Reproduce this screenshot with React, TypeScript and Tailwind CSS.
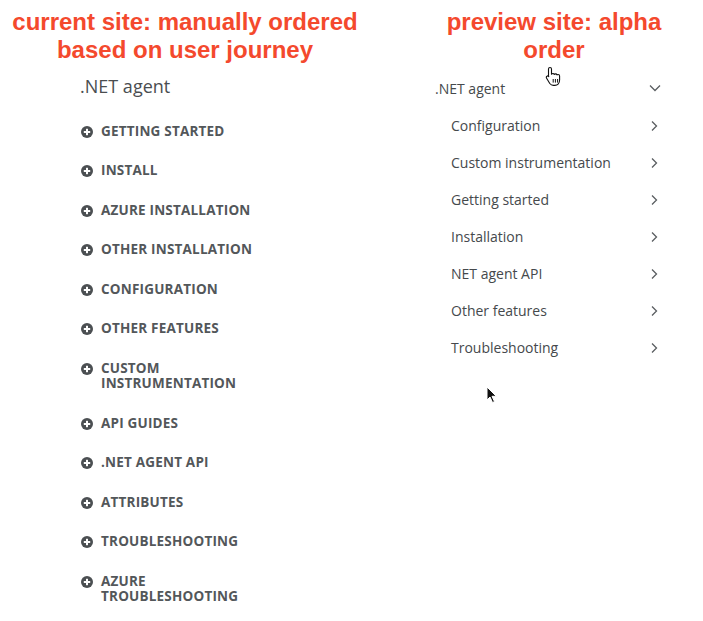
import React from "react";

const currentItems: string[][] = [
  ["GETTING STARTED"],
  ["INSTALL"],
  ["AZURE INSTALLATION"],
  ["OTHER INSTALLATION"],
  ["CONFIGURATION"],
  ["OTHER FEATURES"],
  ["CUSTOM", "INSTRUMENTATION"],
  ["API GUIDES"],
  [".NET AGENT API"],
  ["ATTRIBUTES"],
  ["TROUBLESHOOTING"],
  ["AZURE", "TROUBLESHOOTING"],
];

const previewItems = [
  "Configuration",
  "Custom instrumentation",
  "Getting started",
  "Installation",
  "NET agent API",
  "Other features",
  "Troubleshooting",
];

function PlusCircle() {
  return (
    <svg width="12" height="12" viewBox="0 0 12 12" className="shrink-0 mt-[2px]">
      <circle cx="6" cy="6" r="6" fill="#4b4f52" />
      <rect x="2.8" y="5" width="6.4" height="2" fill="#fff" />
      <rect x="5" y="2.8" width="2" height="6.4" fill="#fff" />
    </svg>
  );
}

function ChevronRight() {
  return (
    <svg width="8" height="12" viewBox="0 0 8 12" className="shrink-0">
      <path d="M2 1.5 L6.5 6 L2 10.5" fill="none" stroke="#5a5e61" strokeWidth="1.3" />
    </svg>
  );
}

function ChevronDown() {
  return (
    <svg width="12" height="8" viewBox="0 0 12 8" className="shrink-0">
      <path d="M1 1.5 L6 6.5 L11 1.5" fill="none" stroke="#5a5e61" strokeWidth="1.3" />
    </svg>
  );
}

function HandCursor() {
  return (
    <svg width="17" height="20" viewBox="0 0 17 20">
      <path
        d="M5 1.5c.8 0 1.5.6 1.5 1.4v5.3c.3-.5.8-.7 1.4-.7.7 0 1.2.4 1.4 1 .3-.4.7-.6 1.3-.6.7 0 1.2.4 1.4 1 .3-.3.7-.4 1.1-.4.9 0 1.5.7 1.5 1.6v4c0 2.8-1.8 5.3-4.8 5.3H8.3c-1.6 0-2.6-.7-3.5-1.9L1.6 12.2c-.5-.7-.4-1.6.3-2 .6-.4 1.4-.2 1.9.4l-.3-.3V2.9c0-.8.7-1.4 1.5-1.4z"
        fill="#fff"
        stroke="#111"
        strokeWidth="1.1"
        strokeLinejoin="round"
      />
      <path d="M8.2 13v3.6M10.4 13v3.6M12.6 13v3.6" stroke="#111" strokeWidth="1" />
    </svg>
  );
}

function ArrowCursor() {
  return (
    <svg width="12" height="18" viewBox="0 0 12 18">
      <path
        d="M1 1 L1 14 L4 11 L6.5 16.5 L8.5 15.6 L6 10.3 L10.3 10.3 Z"
        fill="#111"
        stroke="#fff"
        strokeWidth="1"
        strokeLinejoin="round"
      />
    </svg>
  );
}

export default function App() {
  return (
    <div
      className="relative w-[703px] h-[621px] bg-white overflow-hidden"
      style={{ fontFamily: "'Open Sans', 'Liberation Sans', sans-serif" }}
    >
      <div className="flex">
        {/* current site column */}
        <div className="w-[370px] flex flex-col">
          <h1
            className="pt-[8px] text-center font-bold text-[24px] leading-[28px] text-[#f4492d]"
            style={{ fontFamily: "'Liberation Sans', Arial, sans-serif" }}
          >
            current site: manually ordered
            <br />
            based on user journey
          </h1>
          <div className="pl-[80px] mt-[10px] text-[18px] leading-[24px] text-[#4a4d50]">.NET agent</div>
          <ul className="pl-[81px] mt-[25.5px] flex flex-col gap-[24.6px]">
            {currentItems.map((lines) => (
              <li key={lines.join(" ")} className="flex items-start gap-[8px]">
                <PlusCircle />
                <span className="font-bold text-[13.5px] leading-[15px] text-[#53575a] tracking-[0.2px]">
                  {lines.map((l, i) => (
                    <React.Fragment key={l}>
                      {i > 0 && <br />}
                      {l}
                    </React.Fragment>
                  ))}
                </span>
              </li>
            ))}
          </ul>
        </div>

        {/* preview site column */}
        <div className="w-[298px] ml-[35px] flex flex-col">
          <h1
            className="pt-[8px] text-center font-bold text-[24px] leading-[28px] text-[#f4492d]"
            style={{ fontFamily: "'Liberation Sans', Arial, sans-serif" }}
          >
            preview site: alpha
            <br />
            order
          </h1>
          <div className="mt-[13px] pl-[30px] pr-[42px] h-[22px] flex items-center justify-between text-[14px] text-[#45494c]">
            <span>.NET agent</span>
            <ChevronDown />
          </div>
          <ul className="mt-[8px] pl-[46px] pr-[45px] flex flex-col">
            {previewItems.map((item) => (
              <li key={item} className="h-[37px] flex items-center justify-between text-[14px] text-[#45494c]">
                <span>{item}</span>
                <ChevronRight />
              </li>
            ))}
          </ul>
        </div>
      </div>

      <div className="absolute left-[545px] top-[66px]">
        <HandCursor />
      </div>
      <div className="absolute left-[486px] top-[386px]">
        <ArrowCursor />
      </div>
    </div>
  );
}
